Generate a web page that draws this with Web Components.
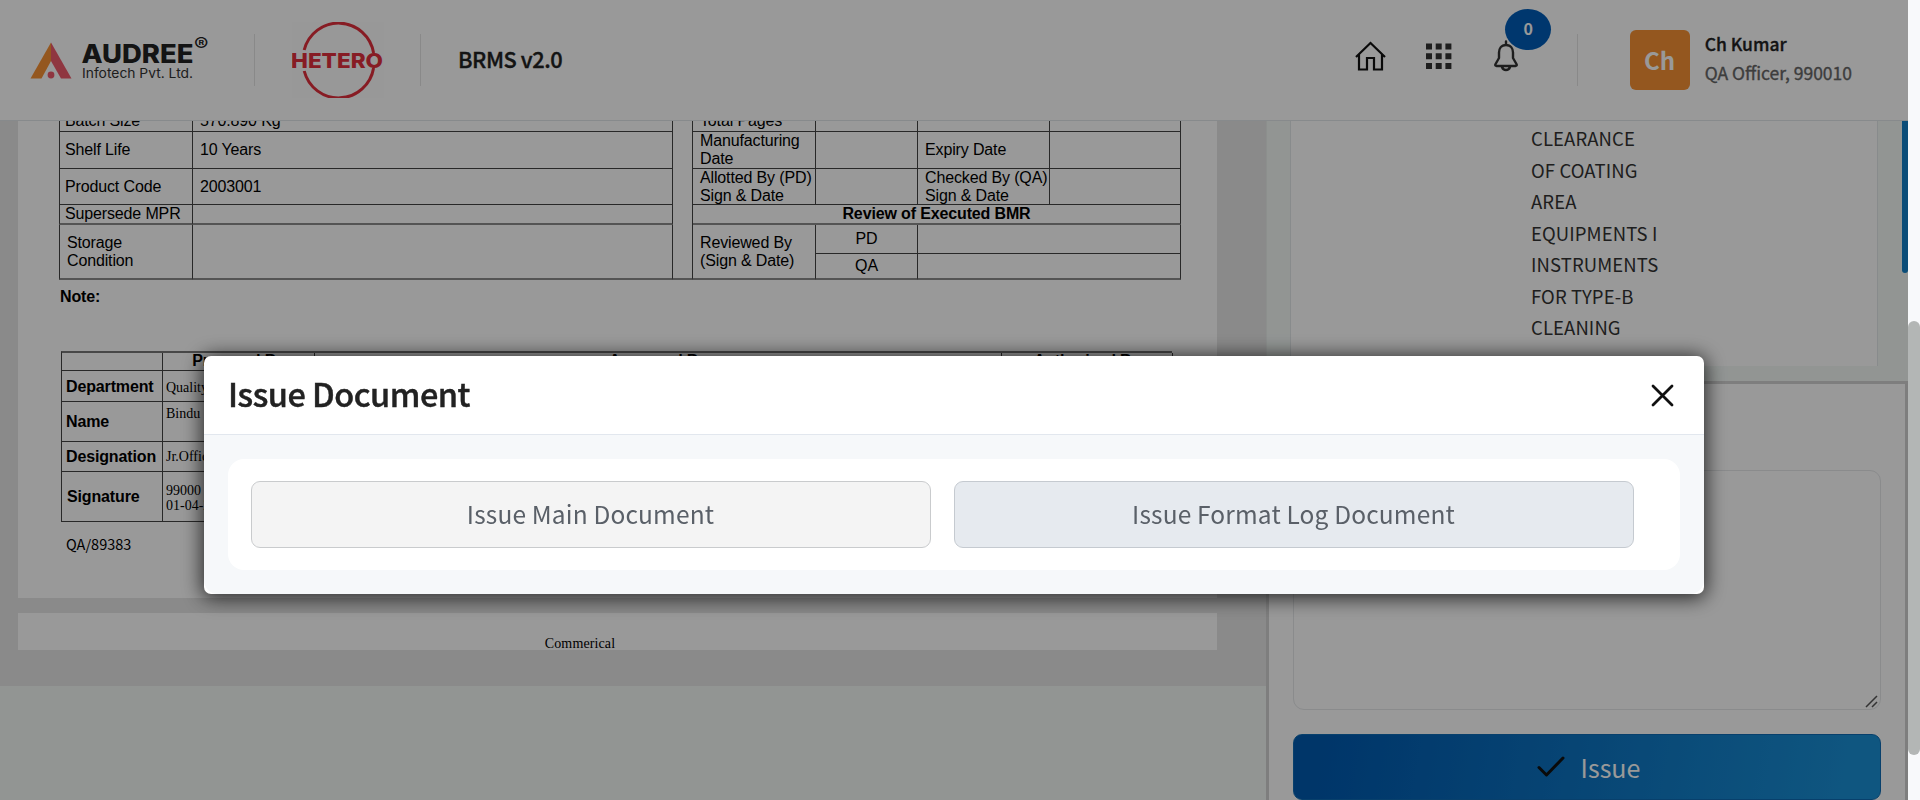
<!DOCTYPE html>
<html lang="en">
<head>
<meta charset="utf-8">
<title>BRMS v2.0</title>
<style>
html,body{margin:0;height:100%;overflow:hidden}
body{font-family:"Noto Sans CJK SC","Open Sans",sans-serif;color:#222}
</style>
</head>
<body>
<brms-app></brms-app>
<script>
const define = (name, css, html) => customElements.define(name, class extends HTMLElement {
  constructor() {
    super();
    this.attachShadow({mode: 'open'}).innerHTML = `<style>*{box-sizing:border-box}${css}</style>${html}`;
  }
});

/* ---------- header ---------- */
define('audree-logo', `:host{display:block;width:180px;height:60px}svg{display:block;overflow:visible}`, `
<svg width="180" height="60" viewBox="30 28 180 60">
  <path d="M51 42.5 30.5 78.5H41.5L51 61Z" fill="#f79134"/>
  <path d="M51 42.5 71.5 78.5H61L51 61Z" fill="#ef5a6c"/>
  <circle cx="51" cy="75" r="3.4" fill="#ef5a6c"/>
  <g font-family="Inter,sans-serif">
    <text x="81.500" y="62.500" font-size="25.500" font-weight="800" textLength="112" lengthAdjust="spacingAndGlyphs" fill="#222">AUDREE</text>
    <text x="82" y="78" font-size="13.500" textLength="111" lengthAdjust="spacingAndGlyphs" fill="#333">Infotech Pvt. Ltd.</text>
    <text x="194" y="50.500" font-size="19" font-weight="500" textLength="14.500" lengthAdjust="spacingAndGlyphs" fill="#222">®</text>
  </g>
</svg>`);

define('hetero-logo', `:host{display:block;width:92px;height:76px;background:#fdfdfd}svg{display:block}`, `
<svg width="92" height="76" viewBox="292 23 92 76" fill="none" stroke="#e1303c" stroke-width="3">
  <path d="M304.2 51A35.5 35.8 0 0 1 373.6 54M304.2 72A35.5 35.8 0 0 0 373.6 69"/>
  <text x="291" y="69" font-family="Inter,sans-serif" font-size="20.5" font-weight="800" textLength="92" lengthAdjust="spacingAndGlyphs" fill="#e1303c" stroke="none">HETERO</text>
</svg>`);

define('bell-button', `
:host{display:block;position:relative;width:26px;height:32px}
svg{display:block}
span{position:absolute;left:12.500px;top:-31px;width:46px;height:41px;border-radius:50%;background:#005db8;color:#fff;font:700 16px/39px "Noto Sans CJK SC",sans-serif;text-align:center}`, `
<svg width="26" height="32" viewBox="0 0 26 32" fill="none" stroke="#333" stroke-width="2.4" stroke-linejoin="round" stroke-linecap="round">
  <path d="M13 1.500V5M13 5C8 5 6 9 6 12.500V18L2.300 24.500Q2 26 3.500 26H22.500Q24 26 23.700 24.500L20 18V12.500C20 9 18 5 13 5ZM9 27Q10 30 13 30T17 27"/>
</svg><span><slot></slot></span>`);

define('user-card', `
:host{display:flex;gap:15px;align-items:center}
.av{width:60px;height:60px;border-radius:6px;background:#f79134;color:#fff;font-weight:700;font-size:24px;line-height:60px;text-align:center}
.n{font-weight:500;font-size:17.500px;line-height:29px;color:#222;-webkit-text-stroke:.3px #222}
.r{font-size:17.500px;line-height:29px;color:#666;-webkit-text-stroke:.35px #666}
.tx{padding-bottom:4px}`, `
<div class="av">Ch</div><div class="tx"><div class="n"><slot name="name"></slot></div><div class="r"><slot name="role"></slot></div></div>`);

define('app-header', `
:host{display:flex;align-items:center;height:121px;flex:none;background:#fff;border-bottom:1px solid #e2e6ea;padding:0 56px 0 30px}
i{width:1px;height:52px;background:#e4e4e4}
audree-logo{margin:-4px 44px 0 0}
hetero-logo{margin:0 36px 0 37px}
.t{margin:-3px 0 0 37px;font-weight:500;font-size:21.800px;line-height:30px;letter-spacing:-.45px;color:#222;-webkit-text-stroke:.35px #222}
.sp{flex:1}
.ic{display:flex;align-items:center;margin-top:-8px}
.ic>svg{display:block}
.g{margin:0 41px 0 40px}
bell-button{margin-right:58px}
user-card{margin-left:52px}`, `
<audree-logo></audree-logo><i></i><hetero-logo></hetero-logo><i></i><div class="t">BRMS v2.0</div><div class="sp"></div>
<div class="ic">
 <svg width="31" height="31" viewBox="0 0 31 31" fill="none" stroke="#111" stroke-width="2.2"><path d="M1 16 15.500 2 30 16M4 13.500V28.500H12V17H19V28.500H27V13.500"/></svg>
 <svg class="g" width="26" height="26" fill="#333"><path d="M0 .5h6v6H0zM9.700 .5h6v6h-6zM19.400 .5h6v6h-6zM0 10.200h6v6H0zM9.700 10.200h6v6h-6zM19.400 10.200h6v6h-6zM0 20h6v6H0zM9.700 20h6v6h-6zM19.400 20h6v6h-6z"/></svg>
 <bell-button>0</bell-button>
</div><i></i>
<user-card><span slot="name">Ch Kumar</span><span slot="role">QA Officer, 990010</span></user-card>`);

/* ---------- document viewer ---------- */
define('bmr-table', `
:host{display:grid;width:1122px;grid-template-columns:134px 480px 20px 123px 102px 132px 131px;grid-template-rows:19px 37px 36px 20px 29px 26px;font:16px/18px "Liberation Sans",sans-serif;letter-spacing:-.14px;color:#000}
div{border:solid #444;border-width:0 1px 1px 0;display:flex;align-items:center;padding-left:7px;white-space:nowrap}
.l{border-left-width:1px;padding-left:5px}
.c{justify-content:center;padding:0}
.s{border-bottom:2px solid #8c8c8c}
.t{padding-bottom:2px}
.gap{grid-column:3;grid-row:1/7;border-bottom:2px solid #8c8c8c}`, `
<div class="l t">Batch Size</div><div class="t">570.890 Kg</div>
<div class="gap"></div>
<div class="t">Total Pages</div><div></div><div></div><div></div>
<div class="l">Shelf Life</div><div>10 Years</div><div>Manufacturing<br>Date</div><div></div><div>Expiry Date</div><div></div>
<div class="l">Product Code</div><div>2003001</div><div>Allotted By (PD)<br>Sign &amp; Date</div><div></div><div>Checked By (QA)<br>Sign &amp; Date</div><div></div>
<div class="l s">Supersede MPR</div><div class="s"></div><div class="c s" style="grid-column:4/8;font-weight:700">Review of Executed BMR</div>
<div class="l s" style="grid-column:1;grid-row:5/7;padding-left:7px">Storage<br>Condition</div><div class="s" style="grid-column:2;grid-row:5/7"></div>
<div class="s" style="grid-column:4;grid-row:5/7">Reviewed By<br>(Sign &amp; Date)</div>
<div class="c">PD</div><div style="grid-column:6/8"></div>
<div class="c s">QA</div><div class="s" style="grid-column:6/8"></div>`);

define('sign-table', `
:host{display:grid;width:1111px;grid-template-columns:101px 152px 687px 171px;grid-template-rows:18px 31px 40px 30px 50px;border-top:2px solid #777;border-left:1px solid #444;font:14px/15px "Liberation Serif",serif;color:#000}
div{border:solid #444;border-width:0 1px 1px 0;display:flex;align-items:center;padding-left:3px;white-space:nowrap}
.b,.c{font:700 16px/17px "Liberation Sans",sans-serif;letter-spacing:-.14px}
.c{justify-content:center;padding:0 0 2px}
.b{padding-left:4px}
.up{align-items:flex-start;padding-top:4px}`, `
<div></div><div class="c">Prepared By</div><div class="c">Approved By</div><div class="c">Authorized By</div>
<div class="b">Department</div><div style="padding-top:3px">Quality</div><div></div><div></div>
<div class="b">Name</div><div class="up">Bindu</div><div></div><div></div>
<div class="b">Designation</div><div>Jr.Officer</div><div></div><div></div>
<div class="b" style="padding-left:5px">Signature</div><div style="padding-top:3px">99000 1<br>01-04-2024</div><div></div><div></div>`);

define('doc-viewer', `
:host{display:block;width:1266px;height:565px;background:#e6e6e6;padding-left:18px;overflow:hidden}
.p{width:1199px;background:#fff;overflow:hidden}
.one{height:477px;padding-left:41px}
bmr-table{margin-top:-8px}
.note{font:700 16px/18px "Liberation Sans",sans-serif;letter-spacing:-.14px;color:#000;margin:8px 0 45px 1px}
sign-table{margin-left:2px}
.id{font-size:14.500px;line-height:20px;color:#000;margin:12px 0 0 7px}
.two{height:37px;margin-top:15px;text-align:center;font:14px/16px "Liberation Serif",serif;letter-spacing:.12px;color:#000;padding:23px 75px 0 0}`, `
<div class="p one"><bmr-table></bmr-table><div class="note">Note:</div><sign-table></sign-table><div class="id">QA/89383</div></div>
<div class="p two">Commerical</div>`);

/* ---------- right column ---------- */
define('task-list', `
:host{display:flex;height:260px;background:#f3f9f6;padding-left:23px;border-left:1px solid #e9eeec;justify-content:space-between}
.card{width:588px;height:245px;background:#fff;border:solid #e3e8ea;border-width:0 1px;padding:2px 200px 0 240px;font-size:18.500px;line-height:31.500px;letter-spacing:.1px;color:#333;white-space:pre-line}
.th{width:6px;height:152px;background:#1481c8;border-radius:0 0 4px 4px}`, `
<div class="card"><slot></slot></div><div class="th"></div>`);

define('issue-button', `
:host{display:flex;align-items:center;justify-content:center;gap:16px;height:66px;border-radius:9px;border:1px solid #0e6cb4;background:linear-gradient(100deg,#005ab0 5%,#1a90d6 95%);color:#fff;font-size:25px;line-height:36px;padding:0 0 1px 3px}
svg{display:block}`, `
<svg width="28" height="21" viewBox="0 0 28 21" fill="none" stroke="#111" stroke-width="3" stroke-linecap="round" stroke-linejoin="round"><path d="M2 11.500 9.500 19 26 2"/></svg><slot></slot>`);

define('issue-form', `
:host{display:block;height:419px;background:#fff;border:3px solid #d3d3d3;border-bottom:0;padding:86px 24px 0}
.ta{height:240px;border:1px solid #e6e8ea;border-radius:11px;margin-bottom:24px;display:flex;align-items:flex-end;justify-content:flex-end;padding:0 1px 1px}
svg{display:block}`, `
<div class="ta"><svg width="14" height="13" fill="none" stroke="#555" stroke-width="1.500"><path d="M1 12 12 1M7 12 12 7"/></svg></div>
<issue-button>Issue</issue-button>`);

define('side-panel', `:host{display:block;width:642px}`, `
<task-list>CLEARANCE
OF COATING
AREA
EQUIPMENTS I
INSTRUMENTS
FOR TYPE-B
CLEANING</task-list><issue-form></issue-form>`);

/* ---------- dialog ---------- */
define('choice-button', `
:host{flex:none;display:flex;align-items:center;justify-content:center;width:680px;height:67px;border:1px solid #c9cbcd;border-radius:9px;background:#f4f4f4;color:#5a6068;font-size:24.500px;line-height:36px;letter-spacing:.15px;padding:0 1px 1px 0}
:host([alt]){background:#e6eaef;border-color:#c5cad0}`, `<slot></slot>`);

define('issue-dialog', `
:host{display:block;width:1500px;height:238px;background:#fff;border-radius:7px;overflow:hidden;box-shadow:0 2px 20px 2px rgba(0,0,0,.75)}
header{height:79px;border-bottom:1px solid #e2e7ee;display:flex;align-items:center;justify-content:space-between;padding:0 30px 0 24px}
h2{margin:-4px 0 0;font-weight:500;font-size:32.500px;line-height:48px;letter-spacing:-.5px;color:#222;-webkit-text-stroke:.45px #222}
svg{display:block}
.b{height:159px;background:#f6f8fa;border-radius:0 0 14px 14px;padding:24px 24px 0}
.c{height:111px;background:#fff;border-radius:16px;padding:22px 0 0 23px;display:flex;gap:23px;align-items:flex-start}`, `
<header><h2>Issue Document</h2><svg width="23" height="23" viewBox="0 0 23 23" stroke="#111" stroke-width="2.800" stroke-linecap="round"><path d="M2 2 21 21M21 2 2 21"/></svg></header>
<div class="b"><div class="c"><choice-button>Issue Main Document</choice-button><choice-button alt>Issue Format Log Document</choice-button></div></div>`);

define('page-scrollbar', `
:host{display:block;width:12px;height:800px;background:#f8f9fb;padding-top:321px}
div{height:434px;border-radius:6px;background:#b3b6b5}`, `<div></div>`);

define('brms-app', `
:host{display:flex;width:1920px;height:800px;overflow:hidden}
.app{width:1908px;height:800px;display:flex;flex-direction:column;background:#f3f9f6}
main{display:flex;flex:1;min-height:0}
.ov{position:fixed;left:0;top:0;width:1908px;height:800px;background:rgba(0,0,0,.4);display:flex;justify-content:center;align-items:flex-start;padding-top:356px}`, `
<div class="app"><app-header></app-header><main><doc-viewer></doc-viewer><side-panel></side-panel></main></div>
<page-scrollbar></page-scrollbar>
<div class="ov"><issue-dialog></issue-dialog></div>`);
</script>
</body>
</html>
